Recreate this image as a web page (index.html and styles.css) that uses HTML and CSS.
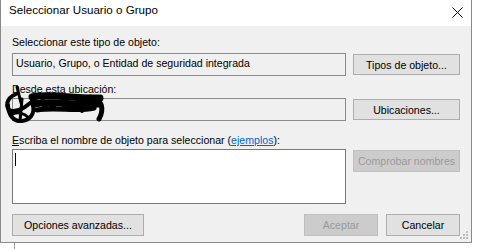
FILE: index.html
```html
<!DOCTYPE html>
<html lang="es">
<head>
    <meta charset="UTF-8">
    <title>Seleccionar Usuario o Grupo</title>
    <link rel="stylesheet" href="styles.css">
</head>
<body>

<div class="window">
    <div class="titlebar">
        <span class="title">Seleccionar Usuario o Grupo</span>
        <svg class="close-icon" width="11" height="11" viewBox="0 0 11 11">
            <path d="M0.5 0.5 L10.5 10.5 M10.5 0.5 L0.5 10.5" stroke="#000" stroke-width="1" fill="none"/>
        </svg>
    </div>

    <div class="dialog-body">
        <div class="field-label">Seleccionar este tipo de objeto:</div>
        <div class="field-row">
            <div class="textbox readonly">Usuario, Grupo, o Entidad de seguridad integrada</div>
            <button class="btn">Tipos de objeto...</button>
        </div>

        <div class="field-label second"><u>D</u>esde esta ubicación:</div>
        <div class="field-row tight">
            <div class="textbox readonly"></div>
            <button class="btn">Ubicaciones...</button>
        </div>

        <div class="field-label third"><u>E</u>scriba el nombre de objeto para seleccionar (<a href="#" class="link">ejemplos</a>):</div>
        <div class="field-row tight top">
            <div class="textarea"><span class="caret"></span></div>
            <button class="btn" disabled>Comprobar nombres</button>
        </div>

        <div class="actions">
            <button class="btn advanced">Opciones avanzadas...</button>
            <div class="actions-right">
                <button class="btn small" disabled>Aceptar</button>
                <button class="btn small">Cancelar</button>
            </div>
        </div>

        <svg class="grip" width="10" height="10" viewBox="0 0 10 10">
            <rect x="8" y="2" width="2" height="2" fill="#bcbcbc"/>
            <rect x="5" y="5" width="2" height="2" fill="#bcbcbc"/>
            <rect x="8" y="5" width="2" height="2" fill="#bcbcbc"/>
            <rect x="2" y="8" width="2" height="2" fill="#bcbcbc"/>
            <rect x="5" y="8" width="2" height="2" fill="#bcbcbc"/>
            <rect x="8" y="8" width="2" height="2" fill="#bcbcbc"/>
        </svg>
    </div>

    <!-- hand drawn redaction over the location -->
    <svg class="scribble" width="110" height="40" viewBox="0 0 110 40">
        <g stroke="#000" fill="none" stroke-linecap="round" stroke-linejoin="round">
            <path d="M15 2 L17 10 L19 18" stroke-width="3"/>
            <path d="M14 9 C4 13, 2 24, 10 26 C18 27, 26 20, 33 14" stroke-width="4"/>
            <path d="M6 20 C6 30, 12 37, 20 36 C28 35, 33 29, 31 20" stroke-width="4"/>
            <path d="M9 30 C15 26, 22 28, 27 33" stroke-width="3"/>
            <path d="M20 14 L18 36" stroke-width="3"/>
            <path d="M30 12 C48 8, 70 14, 98 13" stroke-width="7"/>
            <path d="M32 19 C52 15, 72 21, 97 19" stroke-width="7"/>
            <path d="M35 25 C55 22, 75 27, 92 23" stroke-width="5"/>
            <path d="M42 11 C36 21, 48 29, 54 18" stroke-width="4"/>
            <path d="M62 12 C57 23, 70 28, 75 17" stroke-width="4"/>
            <path d="M78 12 L80 26" stroke-width="4"/>
            <path d="M88 12 C101 13, 102 25, 97 34" stroke-width="5"/>
        </g>
    </svg>
</div>

<div class="backdrop-tick"></div>

</body>
</html>
```

FILE: styles.css
```css
body {
    margin: 0;
    padding: 0;
    background-color: #ffffff;
    font-family: 'Liberation Sans', Arial, sans-serif;
    color: #000;
}

.window {
    position: relative;
    width: 470px;
    border-left: 1px solid #8a8a8a;
    border-right: 1px solid #8a8a8a;
    border-bottom: 1px solid #8a8a8a;
    background: #f0f0f0;
}

.titlebar {
    display: flex;
    align-items: flex-start;
    justify-content: space-between;
    height: 26px;
    box-sizing: border-box;
    padding: 2px 8px 0 8px;
    background: #ffffff;
}

.title {
    font-size: 11.6px;
    line-height: 16px;
}

.close-icon {
    margin-top: 5px;
}

.dialog-body {
    position: relative;
    display: flex;
    flex-direction: column;
    height: 216px;
    box-sizing: border-box;
    padding: 9px 11px 0 11px;
    font-size: 10.6px;
}

.field-label {
    line-height: 15px;
}

.field-label.second {
    margin-top: 6px;
}

.field-label.third {
    margin-top: 12px;
}

.field-label u {
    text-decoration: underline;
}

.link {
    color: #0066cc;
    text-decoration: underline;
}

.field-row {
    display: flex;
    align-items: center;
    gap: 7px;
    margin-top: 3px;
}

.field-row.tight {
    margin-top: 1px;
}

.field-row.top {
    align-items: flex-start;
}

.textbox {
    width: 334px;
    height: 23px;
    box-sizing: border-box;
    border: 1px solid #8a8a8a;
    background: #ffffff;
    padding: 0 3px;
    line-height: 19px;
}

.textbox.readonly {
    background: #f0f0f0;
}

.textarea {
    width: 334px;
    height: 55px;
    box-sizing: border-box;
    border: 1px solid #7a7a7a;
    background: #ffffff;
    padding: 3px 2px;
}

.caret {
    display: block;
    width: 1px;
    height: 13px;
    background: #000;
}

.btn {
    width: 107px;
    height: 21px;
    box-sizing: border-box;
    padding: 0;
    border: 1px solid #adadad;
    background: #e1e1e1;
    font-family: inherit;
    font-size: 10.6px;
    color: #000;
}

.btn:disabled {
    background: #cccccc;
    border-color: #bfbfbf;
    color: #9a9a9a;
}

.field-row.top .btn {
    margin-top: 1px;
    height: 22px;
}

.actions {
    display: flex;
    justify-content: space-between;
    margin-top: 10px;
}

.actions .btn {
    height: 22px;
}

.btn.advanced {
    width: 132px;
}

.actions-right {
    display: flex;
    gap: 8px;
}

.btn.small {
    width: 74px;
}

.grip {
    position: absolute;
    right: 3px;
    bottom: 3px;
}

.scribble {
    position: absolute;
    left: 1px;
    top: 85px;
}

.backdrop-tick {
    width: 1px;
    height: 6px;
    margin-left: 14px;
    background: #9a9a9a;
}
```
